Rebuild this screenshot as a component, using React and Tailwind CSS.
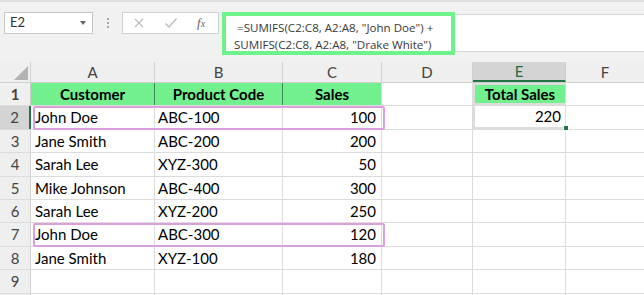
import React from 'react';

const cols = [
  { key: 'A', w: 'w-[124px]' },
  { key: 'B', w: 'w-[128px]' },
  { key: 'C', w: 'w-[99px]' },
  { key: 'D', w: 'w-[91px]' },
  { key: 'E', w: 'w-[93px]' },
];

const data = [
  ['John Doe', 'ABC-100', '100'],
  ['Jane Smith', 'ABC-200', '200'],
  ['Sarah Lee', 'XYZ-300', '50'],
  ['Mike Johnson', 'ABC-400', '300'],
  ['Sarah Lee', 'XYZ-200', '250'],
  ['John Doe', 'ABC-300', '120'],
  ['Jane Smith', 'XYZ-100', '180'],
];

const cell = 'h-full shrink-0 border-r border-[#dcdcdc] flex items-center';

function RowHead({ n, active }) {
  return (
    <div
      className={`w-[31px] shrink-0 h-full flex items-center justify-center border-r border-[#cfcfcf] text-[#444] ${
        active ? 'bg-[#d4d4d4] border-r-2 border-r-[#217346]' : 'bg-[#efefef]'
      }`}
    >
      {n}
    </div>
  );
}

function DataCells({ row, boxed }) {
  const inner = (
    <>
      <div className={`${cell} w-[124px] pl-[4px]`}>{row[0]}</div>
      <div className={`${cell} w-[128px] pl-[3px]`}>{row[1]}</div>
      <div className={`${cell} w-[99px] justify-end pr-[5px]`}>{row[2]}</div>
    </>
  );
  if (!boxed) return inner;
  return (
    <div className="relative flex h-full">
      {inner}
      <div className="absolute left-[2px] -right-[3px] top-0 -bottom-[1px] border-2 border-[#dba0dc] rounded-[2px] pointer-events-none" />
    </div>
  );
}

export default function App() {
  return (
    <div
      className="w-[644px] h-[295px] overflow-hidden bg-white text-[15px] text-black"
      style={{ fontFamily: 'Lato, "Open Sans", sans-serif' }}
    >
      {/* formula bar */}
      <div className="h-[62px] bg-[#f1f1f1] border-t-2 border-t-[#dedede] flex items-start pt-[10px] pl-[4px]">
        <div className="w-[89px] h-[22px] bg-white border border-[#c8c8c8] flex items-center justify-between pl-[5px] pr-[6px] text-[13px] text-[#333]">
          <span>E2</span>
          <span className="w-0 h-0 border-l-[3.5px] border-r-[3.5px] border-t-[4px] border-l-transparent border-r-transparent border-t-[#666]" />
        </div>
        <div className="w-[29px] h-[22px] flex flex-col items-center justify-center gap-[2px]">
          <span className="w-[2px] h-[2px] bg-[#a8a8a8]" />
          <span className="w-[2px] h-[2px] bg-[#a8a8a8]" />
          <span className="w-[2px] h-[2px] bg-[#a8a8a8]" />
        </div>
        <div className="w-[97px] h-[22px] bg-white border border-[#d0d0d0] flex items-center text-[#b0b0b0]">
          <svg width="12" height="12" viewBox="0 0 12 12" className="ml-[10px]">
            <path d="M2 2 L10 10 M10 2 L2 10" stroke="#bdbdbd" strokeWidth="1.3" fill="none" />
          </svg>
          <svg width="14" height="12" viewBox="0 0 14 12" className="ml-[19px]">
            <path d="M1.5 6.5 L5 10 L12.5 1.5" stroke="#bdbdbd" strokeWidth="1.4" fill="none" />
          </svg>
          <span
            className="ml-[19px] italic text-[13px] text-[#666]"
            style={{ fontFamily: '"Liberation Serif", serif' }}
          >
            f<span className="text-[10px]">x</span>
          </span>
        </div>
        <div className="ml-[3px] mt-[2px] flex-1 h-[38px] bg-white border-y border-[#d6d6d6]">
          <div
            className="-mt-[3px] w-[233px] h-[43px] border-4 border-[#6ef28c] pl-[8px] pt-[3px] text-[11.6px] leading-[17px] text-[#3a3a3a] whitespace-nowrap"
            style={{ fontFamily: '"Open Sans", sans-serif' }}
          >
            <div className="pl-[3px]">=SUMIFS(C2:C8, A2:A8, "John Doe") +</div>
            <div>SUMIFS(C2:C8, A2:A8, "Drake White")</div>
          </div>
        </div>
      </div>

      {/* column headers */}
      <div className="h-[21px] flex bg-[#efefef] border-b border-[#cfcfcf] text-[#444]">
        <div className="w-[31px] shrink-0 h-full border-r border-[#cfcfcf] flex items-end justify-end pr-[2px] pb-[2px]">
          <svg width="14" height="14" viewBox="0 0 14 14">
            <polygon points="14,0 14,14 0,14" fill="#b3b3b3" />
          </svg>
        </div>
        {cols.map((c) => (
          <div
            key={c.key}
            className={`${c.w} shrink-0 h-full border-r border-[#cfcfcf] flex items-center justify-center ${
              c.key === 'E' ? 'bg-[#d4d4d4] border-b-2 border-b-[#217346] text-[#1e6b40]' : ''
            }`}
          >
            {c.key}
          </div>
        ))}
        <div className="flex-1 h-full flex items-center justify-center">F</div>
      </div>

      {/* row 1 */}
      <div className="h-[23.4px] flex border-b border-[#dcdcdc] font-bold">
        <RowHead n={1} />
        <div className={`${cell} w-[124px] justify-center bg-[#72f08e] border-r-[#3c8a55]`}>Customer</div>
        <div className={`${cell} w-[128px] justify-center bg-[#72f08e] border-r-[#3c8a55]`}>Product Code</div>
        <div className={`${cell} w-[99px] justify-center bg-[#72f08e]`}>Sales</div>
        <div className={`${cell} w-[91px]`} />
        <div className={`${cell} w-[93px] justify-center bg-[#72f08e] border-2 border-[#2f7a4b]`}>Total Sales</div>
        <div className="flex-1" />
      </div>

      {data.map((row, i) => {
        const n = i + 2;
        return (
          <div key={n} className="h-[23.4px] flex border-b border-[#dcdcdc]">
            <RowHead n={n} active={n === 2} />
            <DataCells row={row} boxed={n === 2 || n === 7} />
            <div className={`${cell} w-[91px]`} />
            {n === 2 ? (
              <div className={`${cell} w-[93px] relative justify-end pr-[4px] border-2 border-t-0 border-[#2f7a4b]`}>
                220
                <span className="absolute -right-[4px] -bottom-[4px] w-[6px] h-[6px] bg-[#217346] border border-white" />
              </div>
            ) : (
              <div className={`${cell} w-[93px]`} />
            )}
            <div className="flex-1" />
          </div>
        );
      })}

      {[9, ''].map((n, i) => (
        <div key={i} className="h-[23.4px] flex border-b border-[#dcdcdc]">
          <RowHead n={n} />
          {cols.map((c) => (
            <div key={c.key} className={`${cell} ${c.w}`} />
          ))}
          <div className="flex-1" />
        </div>
      ))}
    </div>
  );
}
